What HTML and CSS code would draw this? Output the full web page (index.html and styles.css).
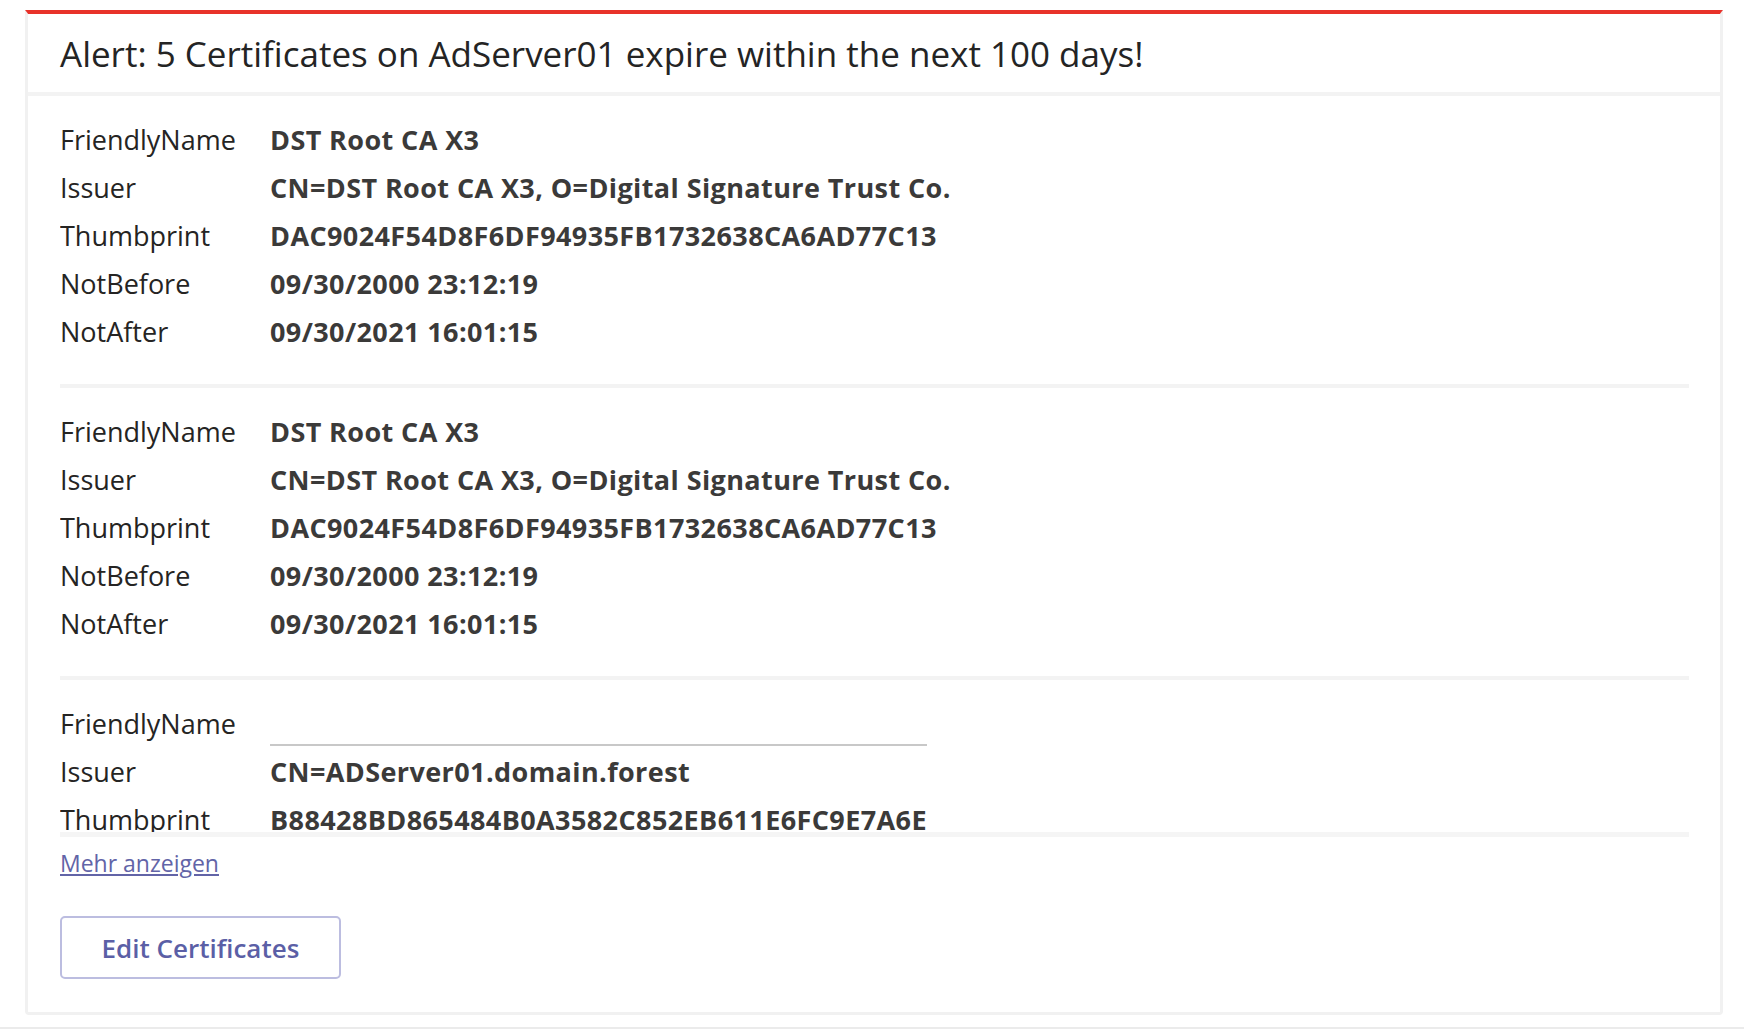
FILE: index.html
```html
<!DOCTYPE html>
<html lang="en">
<head>
    <meta charset="UTF-8">
    <meta name="viewport" content="width=device-width, initial-scale=1.0">
    <title>Certificate Alert</title>
    <link rel="stylesheet" href="styles.css">
</head>
<body>
    <div class="card">
        <div class="card-header">
            <h1 class="card-title">Alert: 5 Certificates on AdServer01 expire within the next 100 days!</h1>
        </div>

        <div class="card-body">
            <div class="fact-list">
                <div class="fact-set">
                    <div class="fact-name">FriendlyName</div><div class="fact-value">DST Root CA X3</div>
                    <div class="fact-name">Issuer</div><div class="fact-value">CN=DST Root CA X3, O=Digital Signature Trust Co.</div>
                    <div class="fact-name">Thumbprint</div><div class="fact-value">DAC9024F54D8F6DF94935FB1732638CA6AD77C13</div>
                    <div class="fact-name">NotBefore</div><div class="fact-value">09/30/2000 23:12:19</div>
                    <div class="fact-name">NotAfter</div><div class="fact-value">09/30/2021 16:01:15</div>
                </div>

                <div class="fact-set">
                    <div class="fact-name">FriendlyName</div><div class="fact-value">DST Root CA X3</div>
                    <div class="fact-name">Issuer</div><div class="fact-value">CN=DST Root CA X3, O=Digital Signature Trust Co.</div>
                    <div class="fact-name">Thumbprint</div><div class="fact-value">DAC9024F54D8F6DF94935FB1732638CA6AD77C13</div>
                    <div class="fact-name">NotBefore</div><div class="fact-value">09/30/2000 23:12:19</div>
                    <div class="fact-name">NotAfter</div><div class="fact-value">09/30/2021 16:01:15</div>
                </div>

                <div class="fact-set">
                    <div class="fact-name">FriendlyName</div><div class="fact-value empty"></div>
                    <div class="fact-name">Issuer</div><div class="fact-value">CN=ADServer01.domain.forest</div>
                    <div class="fact-name">Thumbprint</div><div class="fact-value">B88428BD865484B0A3582C852EB611E6FC9E7A6E</div>
                </div>
            </div>

            <a class="show-more" href="#">Mehr anzeigen</a>

            <div class="actions">
                <button class="btn" type="button">Edit Certificates</button>
            </div>
        </div>
    </div>

    <div class="page-foot"></div>
</body>
</html>
```

FILE: styles.css
```css
body {
    margin: 0;
    padding-top: 10px;
    background: #ffffff;
    font-family: "Open Sans", "Noto Sans", sans-serif;
    color: #252423;
}

.card {
    width: 1692px;
    margin-left: 25px;
    background: #ffffff;
    border: 3px solid #f1f1f1;
    border-top: 4px solid #e8322a;
    border-radius: 0 0 4px 4px;
}

.card-header {
    height: 78px;
    padding: 0 32px;
    display: flex;
    align-items: center;
    border-bottom: 4px solid #f3f3f3;
}

.card-title {
    margin: 0;
    font-size: 35px;
    font-weight: 400;
    color: #242424;
}

.card-body {
    padding: 0 31px 33px 32px;
}

.fact-list {
    max-height: 736px;
    overflow: hidden;
    border-bottom: 5px solid #f5f5f5;
}

.fact-set {
    display: grid;
    grid-template-columns: 210px max-content;
    padding: 20px 0 28px;
    border-bottom: 4px solid #f3f3f3;
    font-size: 27px;
    line-height: 48px;
}

.fact-name {
    color: #252423;
}

.fact-value {
    font-weight: 700;
    color: #3b3a39;
    letter-spacing: 0.4px;
}

.fact-value.empty {
    height: 44px;
    margin-bottom: 2px;
    border-bottom: 2px solid #c8c8c8;
}

.show-more {
    display: inline-block;
    margin-top: 11px;
    font-size: 23px;
    line-height: 30px;
    color: #6264a7;
}

.actions {
    margin-top: 38px;
}

.btn {
    width: 281px;
    height: 63px;
    background: #ffffff;
    border: 2px solid #bcbde0;
    border-radius: 5px;
    font-family: inherit;
    font-size: 26px;
    font-weight: 600;
    color: #5b5fa6;
}

.page-foot {
    height: 2px;
    margin-top: 12px;
    background: #ebebeb;
}
```
